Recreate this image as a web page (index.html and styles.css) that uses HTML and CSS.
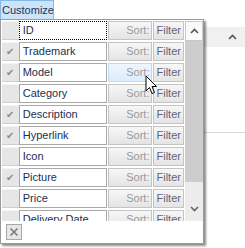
FILE: index.html
```html
<!DOCTYPE html>
<html lang="en">
<head>
    <meta charset="UTF-8">
    <title>Customize columns</title>
    <link rel="stylesheet" href="styles.css">
</head>
<body>
    <div class="page">
        <button class="customize">Customize</button>

        <div class="grid">
            <div class="grid-head">
                <svg width="9" height="6" viewBox="0 0 9 6"><path d="M1 5 L4.5 1.5 L8 5" fill="none" stroke="#555" stroke-width="1.6"/></svg>
            </div>
        </div>

        <div class="popup">
            <div class="list">
                <div class="rows">
                    <div class="row"><span class="check"></span><span class="name focus">ID</span><span class="sort">Sort:</span><span class="filter">Filter</span></div>
                    <div class="row"><span class="check">&#10004;</span><span class="name">Trademark</span><span class="sort">Sort:</span><span class="filter">Filter</span></div>
                    <div class="row"><span class="check">&#10004;</span><span class="name">Model</span><span class="sort hover">Sort:</span><span class="filter">Filter</span></div>
                    <div class="row"><span class="check"></span><span class="name">Category</span><span class="sort">Sort:</span><span class="filter">Filter</span></div>
                    <div class="row"><span class="check">&#10004;</span><span class="name">Description</span><span class="sort">Sort:</span><span class="filter">Filter</span></div>
                    <div class="row"><span class="check">&#10004;</span><span class="name">Hyperlink</span><span class="sort">Sort:</span><span class="filter">Filter</span></div>
                    <div class="row"><span class="check"></span><span class="name">Icon</span><span class="sort">Sort:</span><span class="filter">Filter</span></div>
                    <div class="row"><span class="check">&#10004;</span><span class="name">Picture</span><span class="sort">Sort:</span><span class="filter">Filter</span></div>
                    <div class="row"><span class="check"></span><span class="name">Price</span><span class="sort">Sort:</span><span class="filter">Filter</span></div>
                    <div class="row"><span class="check"></span><span class="name">Delivery Date</span><span class="sort">Sort:</span><span class="filter">Filter</span></div>
                </div>
                <div class="scrollbar">
                    <div class="scroll-btn">
                        <svg width="9" height="6" viewBox="0 0 9 6"><path d="M1 5 L4.5 1.5 L8 5" fill="none" stroke="#555" stroke-width="1.6"/></svg>
                    </div>
                    <div class="thumb"></div>
                    <div class="track">
                        <svg width="9" height="6" viewBox="0 0 9 6"><path d="M1 1 L4.5 4.5 L8 1" fill="none" stroke="#666" stroke-width="1.6"/></svg>
                    </div>
                </div>
            </div>
            <div class="footer">
                <button class="close">
                    <svg width="10" height="10" viewBox="0 0 10 10"><path d="M1.5 1.5 L8.5 8.5 M8.5 1.5 L1.5 8.5" stroke="#7a7a7a" stroke-width="1.6"/></svg>
                </button>
            </div>
        </div>

        <svg class="cursor" width="13" height="21" viewBox="0 0 13 21">
            <path d="M1 1 L1 16 L4.5 12.5 L7 18.5 L9.5 17.5 L7 11.5 L11.5 11.5 Z" fill="#fff" stroke="#000" stroke-width="1"/>
        </svg>
    </div>
</body>
</html>
```

FILE: styles.css
```css
body {
    margin: 0;
    font-family: "Liberation Sans", Arial, sans-serif;
    font-size: 11px;
    background-color: #fff;
}

.page {
    position: relative;
    width: 245px;
    height: 248px;
    overflow: hidden;
}

.customize {
    display: block;
    width: 54px;
    height: 20px;
    margin: 0;
    padding: 0 1px;
    border: 1px solid #84b7ea;
    background-color: #cde4f8;
    color: #1e3560;
    font-family: "Liberation Sans", Arial, sans-serif;
    font-size: 11px;
    text-align: left;
}

.grid {
    margin-top: 7px;
    margin-left: 60px;
    height: 105px;
    border-bottom: 1px solid #dadada;
}

.grid-head {
    height: 20px;
    background-color: #f0f0f0;
    display: flex;
    justify-content: flex-end;
    align-items: center;
    padding-right: 8px;
}

.popup {
    position: absolute;
    left: 0;
    top: 19px;
    width: 202px;
    height: 223px;
    border: 1px solid #9a9a9a;
    background-color: #fff;
    box-shadow: 2px 2px 2px rgba(0, 0, 0, 0.45);
}

.list {
    display: flex;
    height: 200px;
    padding-top: 1px;
    background-color: #fff;
}

.rows {
    width: 182px;
    padding-left: 1px;
    display: flex;
    flex-direction: column;
    gap: 2px;
    overflow: hidden;
}

.row {
    display: flex;
    flex: 0 0 19px;
    height: 19px;
}

.row span {
    box-sizing: border-box;
    height: 19px;
    line-height: 17px;
    white-space: nowrap;
}

.check {
    width: 17px;
    background-color: #e6e6e6;
    border-top: 1px solid #f4f4f4;
    border-bottom: 1px solid #cfcfcf;
    color: #8a8a8a;
    font-size: 10px;
    text-align: center;
}

.name {
    width: 90px;
    padding-left: 3px;
    border: 1px solid #a9a9a9;
    color: #1c2f52;
    overflow: hidden;
}

.name.focus {
    border: 1px dotted #000;
}

.sort {
    width: 45px;
    margin-left: 1px;
    padding-right: 2px;
    border: 1px solid #c4c4c4;
    background: linear-gradient(#f7f7f7, #e4e4e4);
    color: #9a9a9a;
    text-align: right;
}

.sort.hover {
    background: linear-gradient(#eef6fd, #dcecfb);
    border-color: #c3d8ee;
}

.filter {
    width: 31px;
    margin-left: 1px;
    padding-left: 2px;
    border: 1px solid #c4c4c4;
    background: linear-gradient(#f7f7f7, #e4e4e4);
    color: #5f6478;
}

.scrollbar {
    width: 18px;
    margin-left: 1px;
    display: flex;
    flex-direction: column;
}

.scroll-btn {
    box-sizing: border-box;
    height: 20px;
    border: 1px solid #c8c8c8;
    background-color: #fafafa;
    display: flex;
    justify-content: center;
    align-items: center;
}

.thumb {
    height: 141px;
    background-color: #cdcdcd;
}

.track {
    flex: 1;
    background-color: #ececec;
    display: flex;
    justify-content: center;
    align-items: flex-end;
    padding-bottom: 9px;
}

.footer {
    height: 22px;
    padding: 3px 0 0 5px;
    box-sizing: border-box;
}

.close {
    display: flex;
    justify-content: center;
    align-items: center;
    width: 16px;
    height: 16px;
    margin: 0;
    padding: 0;
    border: 1px solid #a8a8a8;
    background-color: #e6e6e6;
}

.cursor {
    position: absolute;
    left: 145px;
    top: 75px;
}
```
